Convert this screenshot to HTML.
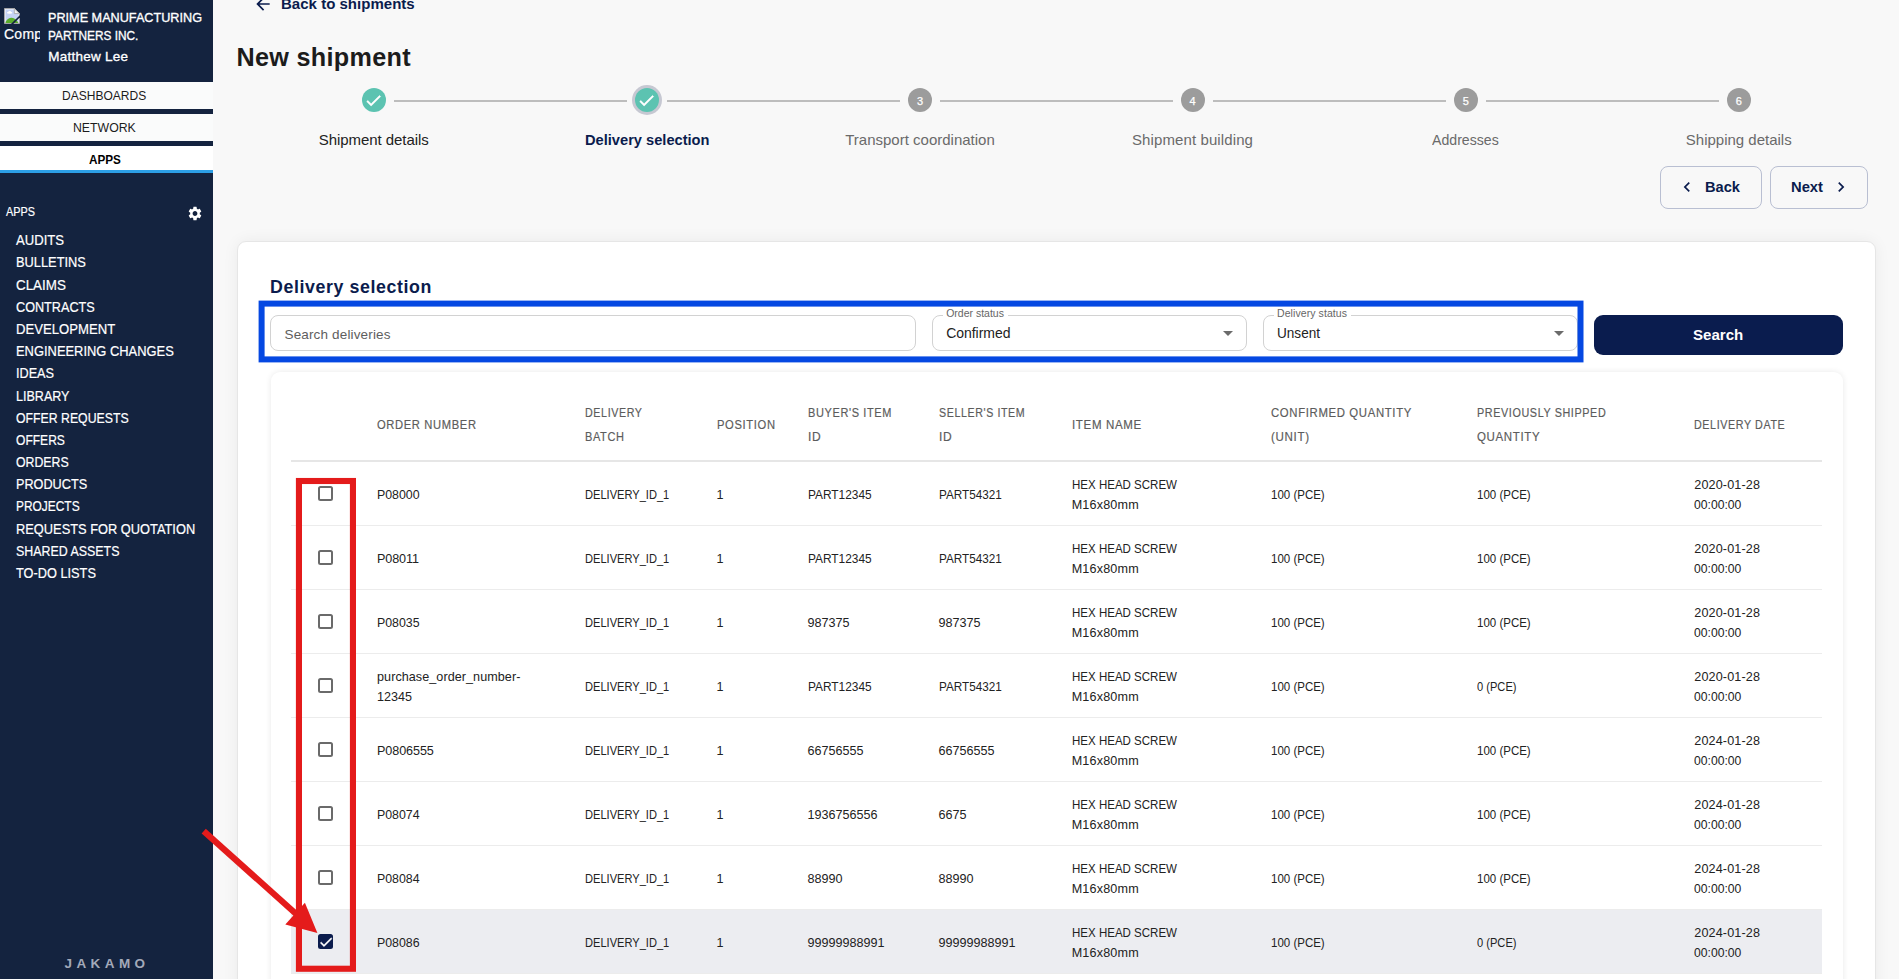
<!DOCTYPE html>
<html lang="en"><head><meta charset="utf-8"><title>New shipment</title>
<style>
*{box-sizing:border-box;margin:0;padding:0}
html,body{width:1899px;height:979px;overflow:hidden;background:#f8f8f8;font-family:'Liberation Sans', sans-serif;}
span{white-space:nowrap}
.x{display:inline-block}
.x>span{display:inline-block;transform-origin:0 50%}
.abs{position:absolute}
.navy{color:#0b1c4d}
#sb{position:absolute;left:0;top:0;width:213px;height:979px;background:#14233f;overflow:hidden;color:#fff}
#sb .brk{position:absolute;left:3.6px;top:7.6px}
#sb .alt{position:absolute;left:4px;top:25px;width:36px;overflow:hidden;line-height:18px;white-space:nowrap;-webkit-text-stroke:.2px #fff}
#sb .co{position:absolute;left:48.3px;line-height:18px;-webkit-text-stroke:.32px #fff}
#sb .tab{position:absolute;left:0;width:213px;color:#1c1c1c;text-align:center;padding-right:4px;display:flex;align-items:center;justify-content:center}
#sb .sec{position:absolute;left:6px;top:201.8px;line-height:18px;-webkit-text-stroke:.2px #fff}
#sb .gear{position:absolute;left:187px;top:204.5px}
#sb .menu{position:absolute;left:16px;top:229.2px}
#sb .mi{height:22.2px;line-height:22.2px;-webkit-text-stroke:.2px #fff}
#sb .logo{position:absolute;left:0;width:213px;top:954px;text-align:center;font:bold 13.5px 'Liberation Sans', sans-serif;letter-spacing:4.4px;color:#a3a9b9;line-height:20px;padding-left:1px}
.conn{position:absolute;top:100px;height:1.5px;background:#bdbdbd}
.circ{position:absolute;top:88px;width:24px;height:24px;border-radius:50%;display:flex;align-items:center;justify-content:center}
.circ.done,.circ.act{background:#5cc3b1}
.circ.todo{background:#9c9c9c;color:#fff;font:11px 'Liberation Sans', sans-serif;padding-top:1px;-webkit-text-stroke:.25px #fff}
.halo{position:absolute;top:85px;width:30px;height:30px;border-radius:50%;background:#c6c8d2}
.slab{position:absolute;top:130px;width:300px;text-align:center;line-height:20px;color:#6a6a6a}
.slab.done{color:#222}
.slab.act{color:#0b1c4d}
.btn{position:absolute;top:166.25px;height:42.5px;border:1px solid #b9bfd2;border-radius:8px}
#card{position:absolute;left:237px;top:241px;width:1638.5px;height:800px;background:#fff;border:1px solid #e6e6e6;border-radius:9px;box-shadow:0 0 16px rgba(0,0,0,.06)}
.inp{position:absolute;top:315px;height:36px;border:1px solid #d2d2d2;border-radius:8px;background:#fff}
.notch{position:absolute;top:-2px;height:4px;background:#fff}
.caret{right:13px;top:15px}
#sbtn{position:absolute;left:1594px;top:315px;width:249px;height:40px;border-radius:9px;background:#0a1c4e;color:#fff;display:flex;align-items:center;justify-content:center;padding-top:0px}
#blue{position:absolute;left:258.5px;top:300.5px;width:1325px;height:62px;border:6.2px solid #0548e2}
#tcard{position:absolute;left:271px;top:371.5px;width:1571.5px;height:700px;background:#fff;border-radius:9px;box-shadow:0 0 6px rgba(0,0,0,.09)}
.th{position:absolute;line-height:24px;color:#5c5c5c;-webkit-text-stroke:.18px #5c5c5c}
#hline{position:absolute;left:291px;top:459.7px;width:1531px;height:2px;background:#e6e6e6}
.tr{position:absolute;left:291px;width:1531px;height:64px;border-bottom:1px solid #ececec}
.tr.sel{background:#ecedf1}
.td{position:absolute;line-height:20px;color:#222}
.cb{position:absolute;left:27.2px;top:24.6px;width:15px;height:15.3px;border:2px solid #6a6a6a;border-radius:2.5px;background:#fff}
.cb.on{background:#0b1c4d;border:none;display:flex;align-items:center;justify-content:center}
#red{position:absolute;left:295.8px;top:478.2px;width:60.2px;height:493.6px;border:6.2px solid #e41b1b}
</style></head>
<body>

<svg class="abs" style="left:253.2px;top:-6.5px" width="20" height="20" viewBox="0 0 24 24"><path fill="#0b1c4d" d="M20 11H7.83l5.59-5.59L12 4l-8 8 8 8 1.41-1.41L7.83 13H20v-2z"/></svg>
<div class="abs navy" style="left:281.3px;top:-5.2px;line-height:18px"><span class="x" style="width:133.7px;font:bold 15.5px 'Liberation Sans', sans-serif;"><span style="transform:scaleX(0.9702)">Back to shipments</span></span></div>
<div class="abs" style="left:236.5px;top:42.5px;line-height:34px;color:#1c1c1c"><span style="font:bold 25.2px 'Liberation Sans', sans-serif;letter-spacing:0.30px;">New shipment</span></div>
<div class="conn" style="left:393.75px;width:233.0px"></div><div class="circ done" style="left:361.75px"><svg width="19" height="19" viewBox="0 0 24 24" style="flex:none"><path fill="#fff" stroke="#fff" stroke-width=".7" d="M9 16.17L4.83 12l-1.42 1.41L9 19 21 7l-1.41-1.41z"/></svg></div><div class="slab done" style="left:223.75px"><span style="font:15px 'Liberation Sans', sans-serif;letter-spacing:-0.06px;">Shipment details</span></div><div class="conn" style="left:666.75px;width:233.25px"></div><div class="halo" style="left:631.75px"></div><div class="circ act" style="left:634.75px"><svg width="19" height="19" viewBox="0 0 24 24" style="flex:none"><path fill="#fff" stroke="#fff" stroke-width=".7" d="M9 16.17L4.83 12l-1.42 1.41L9 19 21 7l-1.41-1.41z"/></svg></div><div class="slab act" style="left:496.75px"><span class="x" style="width:124.5px;font:bold 15px 'Liberation Sans', sans-serif;"><span style="transform:scaleX(0.9759)">Delivery selection</span></span></div><div class="conn" style="left:940px;width:232.5px"></div><div class="circ todo" style="left:908px"><span>3</span></div><div class="slab todo" style="left:770px"><span style="font:15px 'Liberation Sans', sans-serif;">Transport coordination</span></div><div class="conn" style="left:1212.5px;width:233.25px"></div><div class="circ todo" style="left:1180.5px"><span>4</span></div><div class="slab todo" style="left:1042.5px"><span style="font:15px 'Liberation Sans', sans-serif;letter-spacing:0.11px;">Shipment building</span></div><div class="conn" style="left:1485.75px;width:233.0px"></div><div class="circ todo" style="left:1453.75px"><span>5</span></div><div class="slab todo" style="left:1315.75px"><span class="x" style="width:66.8px;font:15px 'Liberation Sans', sans-serif;"><span style="transform:scaleX(0.9418)">Addresses</span></span></div><div class="circ todo" style="left:1726.75px"><span>6</span></div><div class="slab todo" style="left:1588.75px"><span style="font:15px 'Liberation Sans', sans-serif;">Shipping details</span></div>
<div class="btn" style="left:1660px;width:101.75px">
  <svg class="abs" style="left:15.5px;top:10px" width="20" height="20" viewBox="0 0 24 24"><path fill="#0b1c4d" d="M15.41 7.41L14 6l-6 6 6 6 1.41-1.41L10.83 12z"/></svg>
  <div class="abs navy" style="left:44.2px;top:11px;line-height:18px"><span class="x" style="width:35.0px;font:bold 15px 'Liberation Sans', sans-serif;"><span style="transform:scaleX(0.9760)">Back</span></span></div>
</div>
<div class="btn" style="left:1769.75px;width:98px">
  <div class="abs navy" style="left:20px;top:11px;line-height:18px"><span class="x" style="width:32.0px;font:bold 15px 'Liberation Sans', sans-serif;"><span style="transform:scaleX(0.9841)">Next</span></span></div>
  <svg class="abs" style="left:60.2px;top:10px" width="20" height="20" viewBox="0 0 24 24"><path fill="#0b1c4d" d="M10 6L8.59 7.41 13.17 12l-4.58 4.59L10 18l6-6z"/></svg>
</div>


<div id="card"></div>
<div class="abs navy" style="left:270px;top:276.3px;line-height:24px"><span style="font:bold 17.8px 'Liberation Sans', sans-serif;letter-spacing:0.60px;">Delivery selection</span></div>
<div class="inp" style="left:270px;width:645.75px"><div class="abs" style="left:13.5px;top:9px;line-height:18px;color:#5e5e5e"><span style="font:13.5px 'Liberation Sans', sans-serif;letter-spacing:0.15px;">Search deliveries</span></div></div>
<div class="inp" style="left:932px;width:314.75px">
  <div class="notch" style="left:9.5px;width:65px"></div>
  <div class="abs" style="left:13.2px;top:-9.8px;line-height:12px;color:#666"><span style="font:10.5px 'Liberation Sans', sans-serif;">Order status</span></div>
  <div class="abs" style="left:13.2px;top:8px;line-height:18px;color:#222"><span style="font:14px 'Liberation Sans', sans-serif;letter-spacing:-0.04px;">Confirmed</span></div>
  <svg class="abs caret" width="10" height="5" viewBox="0 0 10 5"><path d="M0 0h10L5 5z" fill="#6b6b6b"/></svg>
</div>
<div class="inp" style="left:1263px;width:315px">
  <div class="notch" style="left:9.5px;width:77px"></div>
  <div class="abs" style="left:13px;top:-9.8px;line-height:12px;color:#666"><span style="font:10.5px 'Liberation Sans', sans-serif;letter-spacing:0.08px;">Delivery status</span></div>
  <div class="abs" style="left:13px;top:8px;line-height:18px;color:#222"><span class="x" style="width:43.0px;font:14px 'Liberation Sans', sans-serif;"><span style="transform:scaleX(0.9694)">Unsent</span></span></div>
  <svg class="abs caret" width="10" height="5" viewBox="0 0 10 5"><path d="M0 0h10L5 5z" fill="#6b6b6b"/></svg>
</div>
<div id="sbtn"><span class="x" style="width:50.2px;font:bold 15.5px 'Liberation Sans', sans-serif;"><span style="transform:scaleX(0.9719)">Search</span></span></div>
<svg class="abs" style="left:250px;top:295px" width="1340" height="75" viewBox="250 295 1340 75"><rect x="261.6" y="303.6" width="1318.9" height="55.8" fill="none" stroke="#0548e2" stroke-width="6"/></svg>


<div id="tcard"></div>
<div class="th" style="left:377px;top:411.5px"><div><span class="x" style="width:99.0px;font:12.4px 'Liberation Sans', sans-serif;letter-spacing:0.7px;"><span style="transform:scaleX(0.9033)">ORDER NUMBER</span></span></div></div><div class="th" style="left:585px;top:399.5px"><div><span class="x" style="width:57.0px;font:12.4px 'Liberation Sans', sans-serif;letter-spacing:0.7px;"><span style="transform:scaleX(0.8640)">DELIVERY</span></span></div><div><span class="x" style="width:39.0px;font:12.4px 'Liberation Sans', sans-serif;letter-spacing:0.7px;"><span style="transform:scaleX(0.8888)">BATCH</span></span></div></div><div class="th" style="left:716.5px;top:411.5px"><div><span class="x" style="width:58.0px;font:12.4px 'Liberation Sans', sans-serif;letter-spacing:0.7px;"><span style="transform:scaleX(0.9047)">POSITION</span></span></div></div><div class="th" style="left:807.5px;top:399.5px"><div><span class="x" style="width:83.4px;font:12.4px 'Liberation Sans', sans-serif;letter-spacing:0.7px;"><span style="transform:scaleX(0.8866)">BUYER'S ITEM</span></span></div><div><span class="x" style="width:12.7px;font:12.4px 'Liberation Sans', sans-serif;letter-spacing:0.7px;"><span style="transform:scaleX(0.9697)">ID</span></span></div></div><div class="th" style="left:938.5px;top:399.5px"><div><span class="x" style="width:85.7px;font:12.4px 'Liberation Sans', sans-serif;letter-spacing:0.7px;"><span style="transform:scaleX(0.8605)">SELLER'S ITEM</span></span></div><div><span class="x" style="width:12.7px;font:12.4px 'Liberation Sans', sans-serif;letter-spacing:0.7px;"><span style="transform:scaleX(0.9697)">ID</span></span></div></div><div class="th" style="left:1071.7px;top:411.5px"><div><span class="x" style="width:69.3px;font:12.4px 'Liberation Sans', sans-serif;letter-spacing:0.7px;"><span style="transform:scaleX(0.9309)">ITEM NAME</span></span></div></div><div class="th" style="left:1270.7px;top:399.5px"><div><span class="x" style="width:140.3px;font:12.4px 'Liberation Sans', sans-serif;letter-spacing:0.7px;"><span style="transform:scaleX(0.9169)">CONFIRMED QUANTITY</span></span></div><div><span class="x" style="width:38.0px;font:12.4px 'Liberation Sans', sans-serif;letter-spacing:0.7px;"><span style="transform:scaleX(0.9342)">(UNIT)</span></span></div></div><div class="th" style="left:1476.7px;top:399.5px"><div><span class="x" style="width:128.7px;font:12.4px 'Liberation Sans', sans-serif;letter-spacing:0.7px;"><span style="transform:scaleX(0.8708)">PREVIOUSLY SHIPPED</span></span></div><div><span class="x" style="width:62.7px;font:12.4px 'Liberation Sans', sans-serif;letter-spacing:0.7px;"><span style="transform:scaleX(0.9282)">QUANTITY</span></span></div></div><div class="th" style="left:1694.3px;top:411.5px"><div><span class="x" style="width:90.7px;font:12.4px 'Liberation Sans', sans-serif;letter-spacing:0.7px;"><span style="transform:scaleX(0.8653)">DELIVERY DATE</span></span></div></div>
<div id="hline"></div>
<div class="tr" style="top:461.6px"><div class="cb"></div><div class="td" style="left:86px;top:22.200000000000003px"><div><span class="x" style="width:42.6px;font:12.6px 'Liberation Sans', sans-serif;"><span style="transform:scaleX(0.9811)">P08000</span></span></div></div><div class="td" style="left:294px;top:22.200000000000003px"><div><span class="x" style="width:84.3px;font:12.6px 'Liberation Sans', sans-serif;"><span style="transform:scaleX(0.8811)">DELIVERY_ID_1</span></span></div></div><div class="td" style="left:425.5px;top:22.200000000000003px"><div><span style="font:12.6px 'Liberation Sans', sans-serif;">1</span></div></div><div class="td" style="left:516.5px;top:22.200000000000003px"><div><span class="x" style="width:63.7px;font:12.6px 'Liberation Sans', sans-serif;"><span style="transform:scaleX(0.9444)">PART12345</span></span></div></div><div class="td" style="left:647.5px;top:22.200000000000003px"><div><span class="x" style="width:62.7px;font:12.6px 'Liberation Sans', sans-serif;"><span style="transform:scaleX(0.9295)">PART54321</span></span></div></div><div class="td" style="left:780.7px;top:12.200000000000003px"><div><span class="x" style="width:105.0px;font:12.6px 'Liberation Sans', sans-serif;"><span style="transform:scaleX(0.9149)">HEX HEAD SCREW</span></span></div><div><span style="font:12.6px 'Liberation Sans', sans-serif;letter-spacing:0.17px;">M16x80mm</span></div></div><div class="td" style="left:979.7px;top:22.200000000000003px"><div><span class="x" style="width:53.7px;font:12.6px 'Liberation Sans', sans-serif;"><span style="transform:scaleX(0.9133)">100 (PCE)</span></span></div></div><div class="td" style="left:1185.7px;top:22.200000000000003px"><div><span class="x" style="width:53.7px;font:12.6px 'Liberation Sans', sans-serif;"><span style="transform:scaleX(0.9133)">100 (PCE)</span></span></div></div><div class="td" style="left:1403.3px;top:12.200000000000003px"><div><span style="font:12.6px 'Liberation Sans', sans-serif;letter-spacing:0.14px;">2020-01-28</span></div><div><span class="x" style="width:47.3px;font:12.6px 'Liberation Sans', sans-serif;"><span style="transform:scaleX(0.9647)">00:00:00</span></span></div></div></div><div class="tr" style="top:525.6px"><div class="cb"></div><div class="td" style="left:86px;top:22.200000000000003px"><div><span style="font:12.6px 'Liberation Sans', sans-serif;letter-spacing:-0.10px;">P08011</span></div></div><div class="td" style="left:294px;top:22.200000000000003px"><div><span class="x" style="width:84.3px;font:12.6px 'Liberation Sans', sans-serif;"><span style="transform:scaleX(0.8811)">DELIVERY_ID_1</span></span></div></div><div class="td" style="left:425.5px;top:22.200000000000003px"><div><span style="font:12.6px 'Liberation Sans', sans-serif;">1</span></div></div><div class="td" style="left:516.5px;top:22.200000000000003px"><div><span class="x" style="width:63.7px;font:12.6px 'Liberation Sans', sans-serif;"><span style="transform:scaleX(0.9444)">PART12345</span></span></div></div><div class="td" style="left:647.5px;top:22.200000000000003px"><div><span class="x" style="width:62.7px;font:12.6px 'Liberation Sans', sans-serif;"><span style="transform:scaleX(0.9295)">PART54321</span></span></div></div><div class="td" style="left:780.7px;top:12.200000000000003px"><div><span class="x" style="width:105.0px;font:12.6px 'Liberation Sans', sans-serif;"><span style="transform:scaleX(0.9149)">HEX HEAD SCREW</span></span></div><div><span style="font:12.6px 'Liberation Sans', sans-serif;letter-spacing:0.17px;">M16x80mm</span></div></div><div class="td" style="left:979.7px;top:22.200000000000003px"><div><span class="x" style="width:53.7px;font:12.6px 'Liberation Sans', sans-serif;"><span style="transform:scaleX(0.9133)">100 (PCE)</span></span></div></div><div class="td" style="left:1185.7px;top:22.200000000000003px"><div><span class="x" style="width:53.7px;font:12.6px 'Liberation Sans', sans-serif;"><span style="transform:scaleX(0.9133)">100 (PCE)</span></span></div></div><div class="td" style="left:1403.3px;top:12.200000000000003px"><div><span style="font:12.6px 'Liberation Sans', sans-serif;letter-spacing:0.14px;">2020-01-28</span></div><div><span class="x" style="width:47.3px;font:12.6px 'Liberation Sans', sans-serif;"><span style="transform:scaleX(0.9647)">00:00:00</span></span></div></div></div><div class="tr" style="top:589.6px"><div class="cb"></div><div class="td" style="left:86px;top:22.200000000000003px"><div><span class="x" style="width:42.6px;font:12.6px 'Liberation Sans', sans-serif;"><span style="transform:scaleX(0.9811)">P08035</span></span></div></div><div class="td" style="left:294px;top:22.200000000000003px"><div><span class="x" style="width:84.3px;font:12.6px 'Liberation Sans', sans-serif;"><span style="transform:scaleX(0.8811)">DELIVERY_ID_1</span></span></div></div><div class="td" style="left:425.5px;top:22.200000000000003px"><div><span style="font:12.6px 'Liberation Sans', sans-serif;">1</span></div></div><div class="td" style="left:516.5px;top:22.200000000000003px"><div><span style="font:12.6px 'Liberation Sans', sans-serif;">987375</span></div></div><div class="td" style="left:647.5px;top:22.200000000000003px"><div><span style="font:12.6px 'Liberation Sans', sans-serif;">987375</span></div></div><div class="td" style="left:780.7px;top:12.200000000000003px"><div><span class="x" style="width:105.0px;font:12.6px 'Liberation Sans', sans-serif;"><span style="transform:scaleX(0.9149)">HEX HEAD SCREW</span></span></div><div><span style="font:12.6px 'Liberation Sans', sans-serif;letter-spacing:0.17px;">M16x80mm</span></div></div><div class="td" style="left:979.7px;top:22.200000000000003px"><div><span class="x" style="width:53.7px;font:12.6px 'Liberation Sans', sans-serif;"><span style="transform:scaleX(0.9133)">100 (PCE)</span></span></div></div><div class="td" style="left:1185.7px;top:22.200000000000003px"><div><span class="x" style="width:53.7px;font:12.6px 'Liberation Sans', sans-serif;"><span style="transform:scaleX(0.9133)">100 (PCE)</span></span></div></div><div class="td" style="left:1403.3px;top:12.200000000000003px"><div><span style="font:12.6px 'Liberation Sans', sans-serif;letter-spacing:0.14px;">2020-01-28</span></div><div><span class="x" style="width:47.3px;font:12.6px 'Liberation Sans', sans-serif;"><span style="transform:scaleX(0.9647)">00:00:00</span></span></div></div></div><div class="tr" style="top:653.6px"><div class="cb"></div><div class="td" style="left:86px;top:12.200000000000003px"><div><span style="font:12.6px 'Liberation Sans', sans-serif;letter-spacing:0.06px;">purchase_order_number-</span></div><div><span style="font:12.6px 'Liberation Sans', sans-serif;">12345</span></div></div><div class="td" style="left:294px;top:22.200000000000003px"><div><span class="x" style="width:84.3px;font:12.6px 'Liberation Sans', sans-serif;"><span style="transform:scaleX(0.8811)">DELIVERY_ID_1</span></span></div></div><div class="td" style="left:425.5px;top:22.200000000000003px"><div><span style="font:12.6px 'Liberation Sans', sans-serif;">1</span></div></div><div class="td" style="left:516.5px;top:22.200000000000003px"><div><span class="x" style="width:63.7px;font:12.6px 'Liberation Sans', sans-serif;"><span style="transform:scaleX(0.9444)">PART12345</span></span></div></div><div class="td" style="left:647.5px;top:22.200000000000003px"><div><span class="x" style="width:62.7px;font:12.6px 'Liberation Sans', sans-serif;"><span style="transform:scaleX(0.9295)">PART54321</span></span></div></div><div class="td" style="left:780.7px;top:12.200000000000003px"><div><span class="x" style="width:105.0px;font:12.6px 'Liberation Sans', sans-serif;"><span style="transform:scaleX(0.9149)">HEX HEAD SCREW</span></span></div><div><span style="font:12.6px 'Liberation Sans', sans-serif;letter-spacing:0.17px;">M16x80mm</span></div></div><div class="td" style="left:979.7px;top:22.200000000000003px"><div><span class="x" style="width:53.7px;font:12.6px 'Liberation Sans', sans-serif;"><span style="transform:scaleX(0.9133)">100 (PCE)</span></span></div></div><div class="td" style="left:1185.7px;top:22.200000000000003px"><div><span class="x" style="width:39.5px;font:12.6px 'Liberation Sans', sans-serif;"><span style="transform:scaleX(0.8818)">0 (PCE)</span></span></div></div><div class="td" style="left:1403.3px;top:12.200000000000003px"><div><span style="font:12.6px 'Liberation Sans', sans-serif;letter-spacing:0.14px;">2020-01-28</span></div><div><span class="x" style="width:47.3px;font:12.6px 'Liberation Sans', sans-serif;"><span style="transform:scaleX(0.9647)">00:00:00</span></span></div></div></div><div class="tr" style="top:717.6px"><div class="cb"></div><div class="td" style="left:86px;top:22.200000000000003px"><div><span style="font:12.6px 'Liberation Sans', sans-serif;letter-spacing:-0.09px;">P0806555</span></div></div><div class="td" style="left:294px;top:22.200000000000003px"><div><span class="x" style="width:84.3px;font:12.6px 'Liberation Sans', sans-serif;"><span style="transform:scaleX(0.8811)">DELIVERY_ID_1</span></span></div></div><div class="td" style="left:425.5px;top:22.200000000000003px"><div><span style="font:12.6px 'Liberation Sans', sans-serif;">1</span></div></div><div class="td" style="left:516.5px;top:22.200000000000003px"><div><span style="font:12.6px 'Liberation Sans', sans-serif;">66756555</span></div></div><div class="td" style="left:647.5px;top:22.200000000000003px"><div><span style="font:12.6px 'Liberation Sans', sans-serif;">66756555</span></div></div><div class="td" style="left:780.7px;top:12.200000000000003px"><div><span class="x" style="width:105.0px;font:12.6px 'Liberation Sans', sans-serif;"><span style="transform:scaleX(0.9149)">HEX HEAD SCREW</span></span></div><div><span style="font:12.6px 'Liberation Sans', sans-serif;letter-spacing:0.17px;">M16x80mm</span></div></div><div class="td" style="left:979.7px;top:22.200000000000003px"><div><span class="x" style="width:53.7px;font:12.6px 'Liberation Sans', sans-serif;"><span style="transform:scaleX(0.9133)">100 (PCE)</span></span></div></div><div class="td" style="left:1185.7px;top:22.200000000000003px"><div><span class="x" style="width:53.7px;font:12.6px 'Liberation Sans', sans-serif;"><span style="transform:scaleX(0.9133)">100 (PCE)</span></span></div></div><div class="td" style="left:1403.3px;top:12.200000000000003px"><div><span style="font:12.6px 'Liberation Sans', sans-serif;letter-spacing:0.14px;">2024-01-28</span></div><div><span class="x" style="width:47.3px;font:12.6px 'Liberation Sans', sans-serif;"><span style="transform:scaleX(0.9647)">00:00:00</span></span></div></div></div><div class="tr" style="top:781.6px"><div class="cb"></div><div class="td" style="left:86px;top:22.200000000000003px"><div><span class="x" style="width:42.6px;font:12.6px 'Liberation Sans', sans-serif;"><span style="transform:scaleX(0.9811)">P08074</span></span></div></div><div class="td" style="left:294px;top:22.200000000000003px"><div><span class="x" style="width:84.3px;font:12.6px 'Liberation Sans', sans-serif;"><span style="transform:scaleX(0.8811)">DELIVERY_ID_1</span></span></div></div><div class="td" style="left:425.5px;top:22.200000000000003px"><div><span style="font:12.6px 'Liberation Sans', sans-serif;">1</span></div></div><div class="td" style="left:516.5px;top:22.200000000000003px"><div><span style="font:12.6px 'Liberation Sans', sans-serif;">1936756556</span></div></div><div class="td" style="left:647.5px;top:22.200000000000003px"><div><span style="font:12.6px 'Liberation Sans', sans-serif;">6675</span></div></div><div class="td" style="left:780.7px;top:12.200000000000003px"><div><span class="x" style="width:105.0px;font:12.6px 'Liberation Sans', sans-serif;"><span style="transform:scaleX(0.9149)">HEX HEAD SCREW</span></span></div><div><span style="font:12.6px 'Liberation Sans', sans-serif;letter-spacing:0.17px;">M16x80mm</span></div></div><div class="td" style="left:979.7px;top:22.200000000000003px"><div><span class="x" style="width:53.7px;font:12.6px 'Liberation Sans', sans-serif;"><span style="transform:scaleX(0.9133)">100 (PCE)</span></span></div></div><div class="td" style="left:1185.7px;top:22.200000000000003px"><div><span class="x" style="width:53.7px;font:12.6px 'Liberation Sans', sans-serif;"><span style="transform:scaleX(0.9133)">100 (PCE)</span></span></div></div><div class="td" style="left:1403.3px;top:12.200000000000003px"><div><span style="font:12.6px 'Liberation Sans', sans-serif;letter-spacing:0.14px;">2024-01-28</span></div><div><span class="x" style="width:47.3px;font:12.6px 'Liberation Sans', sans-serif;"><span style="transform:scaleX(0.9647)">00:00:00</span></span></div></div></div><div class="tr" style="top:845.6px"><div class="cb"></div><div class="td" style="left:86px;top:22.200000000000003px"><div><span class="x" style="width:42.6px;font:12.6px 'Liberation Sans', sans-serif;"><span style="transform:scaleX(0.9811)">P08084</span></span></div></div><div class="td" style="left:294px;top:22.200000000000003px"><div><span class="x" style="width:84.3px;font:12.6px 'Liberation Sans', sans-serif;"><span style="transform:scaleX(0.8811)">DELIVERY_ID_1</span></span></div></div><div class="td" style="left:425.5px;top:22.200000000000003px"><div><span style="font:12.6px 'Liberation Sans', sans-serif;">1</span></div></div><div class="td" style="left:516.5px;top:22.200000000000003px"><div><span style="font:12.6px 'Liberation Sans', sans-serif;">88990</span></div></div><div class="td" style="left:647.5px;top:22.200000000000003px"><div><span style="font:12.6px 'Liberation Sans', sans-serif;">88990</span></div></div><div class="td" style="left:780.7px;top:12.200000000000003px"><div><span class="x" style="width:105.0px;font:12.6px 'Liberation Sans', sans-serif;"><span style="transform:scaleX(0.9149)">HEX HEAD SCREW</span></span></div><div><span style="font:12.6px 'Liberation Sans', sans-serif;letter-spacing:0.17px;">M16x80mm</span></div></div><div class="td" style="left:979.7px;top:22.200000000000003px"><div><span class="x" style="width:53.7px;font:12.6px 'Liberation Sans', sans-serif;"><span style="transform:scaleX(0.9133)">100 (PCE)</span></span></div></div><div class="td" style="left:1185.7px;top:22.200000000000003px"><div><span class="x" style="width:53.7px;font:12.6px 'Liberation Sans', sans-serif;"><span style="transform:scaleX(0.9133)">100 (PCE)</span></span></div></div><div class="td" style="left:1403.3px;top:12.200000000000003px"><div><span style="font:12.6px 'Liberation Sans', sans-serif;letter-spacing:0.14px;">2024-01-28</span></div><div><span class="x" style="width:47.3px;font:12.6px 'Liberation Sans', sans-serif;"><span style="transform:scaleX(0.9647)">00:00:00</span></span></div></div></div><div class="tr sel" style="top:909.6px"><div class="cb on"><svg width="16" height="16" viewBox="0 0 24 24" style="flex:none"><path fill="#fff" stroke="#fff" stroke-width=".6" d="M9 16.17L4.83 12l-1.42 1.41L9 19 21 7l-1.41-1.41z"/></svg></div><div class="td" style="left:86px;top:22.200000000000003px"><div><span class="x" style="width:42.6px;font:12.6px 'Liberation Sans', sans-serif;"><span style="transform:scaleX(0.9811)">P08086</span></span></div></div><div class="td" style="left:294px;top:22.200000000000003px"><div><span class="x" style="width:84.3px;font:12.6px 'Liberation Sans', sans-serif;"><span style="transform:scaleX(0.8811)">DELIVERY_ID_1</span></span></div></div><div class="td" style="left:425.5px;top:22.200000000000003px"><div><span style="font:12.6px 'Liberation Sans', sans-serif;">1</span></div></div><div class="td" style="left:516.5px;top:22.200000000000003px"><div><span style="font:12.6px 'Liberation Sans', sans-serif;">99999988991</span></div></div><div class="td" style="left:647.5px;top:22.200000000000003px"><div><span style="font:12.6px 'Liberation Sans', sans-serif;">99999988991</span></div></div><div class="td" style="left:780.7px;top:12.200000000000003px"><div><span class="x" style="width:105.0px;font:12.6px 'Liberation Sans', sans-serif;"><span style="transform:scaleX(0.9149)">HEX HEAD SCREW</span></span></div><div><span style="font:12.6px 'Liberation Sans', sans-serif;letter-spacing:0.17px;">M16x80mm</span></div></div><div class="td" style="left:979.7px;top:22.200000000000003px"><div><span class="x" style="width:53.7px;font:12.6px 'Liberation Sans', sans-serif;"><span style="transform:scaleX(0.9133)">100 (PCE)</span></span></div></div><div class="td" style="left:1185.7px;top:22.200000000000003px"><div><span class="x" style="width:39.5px;font:12.6px 'Liberation Sans', sans-serif;"><span style="transform:scaleX(0.8818)">0 (PCE)</span></span></div></div><div class="td" style="left:1403.3px;top:12.200000000000003px"><div><span style="font:12.6px 'Liberation Sans', sans-serif;letter-spacing:0.14px;">2024-01-28</span></div><div><span class="x" style="width:47.3px;font:12.6px 'Liberation Sans', sans-serif;"><span style="transform:scaleX(0.9647)">00:00:00</span></span></div></div></div>
<svg class="abs" style="left:290px;top:470px" width="75" height="509" viewBox="290 470 75 509"><rect x="298.95" y="481" width="54" height="487.75" fill="none" stroke="#e41b1b" stroke-width="6.1"/></svg>



<div id="sb">
  <svg class="brk" width="16.4" height="16.4" viewBox="0 0 17 17">
    <path d="M0.5 0.5h10.3l5.2 5.2v10.3h-15.5z" fill="#f2f4fb" stroke="#a9a9a9" stroke-width="1"/>
    <path d="M1.6 1.6H10.3L15 6.3V15.5H1.6z" fill="#c6d3f5"/>
    <ellipse cx="5.8" cy="4.9" rx="2.9" ry="1.1" fill="#fff"/><ellipse cx="5.9" cy="4.1" rx="1.5" ry="1" fill="#fff"/>
    <path d="M1.6 15.5V14.4C3.2 11.2 5.8 10 8 10.1C10.8 10.3 13.4 12.4 15 15.5z" fill="#5aad2b"/>
    <path d="M10.7 0.6v5.2h5.2z" fill="#f3f3f3" stroke="#a9a9a9" stroke-width=".9" stroke-linejoin="round"/>
    <path d="M17 8L8 17" stroke="#14233f" stroke-width="1.7"/>
  </svg>
  <div class="alt"><span style="font:14px 'Liberation Sans', sans-serif;letter-spacing:0.25px;">Company logo</span></div>
  <div class="co" style="top:8px"><span class="x" style="width:154.0px;font:13px 'Liberation Sans', sans-serif;"><span style="transform:scaleX(0.9736)">PRIME MANUFACTURING</span></span></div>
  <div class="co" style="top:26px"><span class="x" style="width:90.4px;font:13px 'Liberation Sans', sans-serif;"><span style="transform:scaleX(0.9113)">PARTNERS INC.</span></span></div>
  <div class="co" style="top:47px"><span style="font:13.5px 'Liberation Sans', sans-serif;letter-spacing:0.23px;">Matthew Lee</span></div>
  <div class="tab" style="top:82px;height:27px;background:#fafbfb"><span class="x" style="width:84.2px;font:13px 'Liberation Sans', sans-serif;"><span style="transform:scaleX(0.9250)">DASHBOARDS</span></span></div>
  <div class="tab" style="top:114px;height:27px;background:#fafbfb"><span class="x" style="width:62.8px;font:13px 'Liberation Sans', sans-serif;"><span style="transform:scaleX(0.9450)">NETWORK</span></span></div>
  <div class="tab" style="top:146px;height:27px;background:#fff;border-bottom:3px solid #2c9fe6;color:#000;padding-top:2.5px"><span class="x" style="width:31.9px;font:bold 13px 'Liberation Sans', sans-serif;"><span style="transform:scaleX(0.9010)">APPS</span></span></div>
  <div class="sec"><span class="x" style="width:29.0px;font:12.5px 'Liberation Sans', sans-serif;"><span style="transform:scaleX(0.8693)">APPS</span></span></div>
  <svg class="gear" width="16" height="17" viewBox="0 0 24 24" preserveAspectRatio="none"><path fill="#fff" d="M19.14 12.94c.04-.3.06-.61.06-.94 0-.32-.02-.64-.07-.94l2.03-1.58a.49.49 0 0 0 .12-.61l-1.92-3.32a.488.488 0 0 0-.59-.22l-2.39.96c-.5-.38-1.03-.7-1.62-.94l-.36-2.54a.484.484 0 0 0-.48-.41h-3.84c-.24 0-.43.17-.47.41l-.36 2.54c-.59.24-1.13.57-1.62.94l-2.39-.96c-.22-.08-.47 0-.59.22L2.74 8.87c-.12.21-.08.47.12.61l2.03 1.58c-.05.3-.09.63-.09.94s.02.64.07.94l-2.03 1.58a.49.49 0 0 0-.12.61l1.92 3.32c.12.22.37.29.59.22l2.39-.96c.5.38 1.03.7 1.62.94l.36 2.54c.05.24.24.41.48.41h3.84c.24 0 .44-.17.47-.41l.36-2.54c.59-.24 1.13-.56 1.62-.94l2.39.96c.22.08.47 0 .59-.22l1.92-3.32c.12-.22.07-.47-.12-.61l-2.01-1.58zM12 15.6c-1.98 0-3.6-1.62-3.6-3.6s1.62-3.6 3.6-3.6 3.6 1.62 3.6 3.6-1.62 3.6-3.6 3.6z"/></svg>
  <div class="menu"><div class="mi"><span class="x" style="width:48.0px;font:14px 'Liberation Sans', sans-serif;"><span style="transform:scaleX(0.9349)">AUDITS</span></span></div><div class="mi"><span class="x" style="width:69.9px;font:14px 'Liberation Sans', sans-serif;"><span style="transform:scaleX(0.9167)">BULLETINS</span></span></div><div class="mi"><span class="x" style="width:49.8px;font:14px 'Liberation Sans', sans-serif;"><span style="transform:scaleX(0.9554)">CLAIMS</span></span></div><div class="mi"><span class="x" style="width:78.7px;font:14px 'Liberation Sans', sans-serif;"><span style="transform:scaleX(0.9033)">CONTRACTS</span></span></div><div class="mi"><span class="x" style="width:99.2px;font:14px 'Liberation Sans', sans-serif;"><span style="transform:scaleX(0.9375)">DEVELOPMENT</span></span></div><div class="mi"><span class="x" style="width:157.8px;font:14px 'Liberation Sans', sans-serif;"><span style="transform:scaleX(0.9220)">ENGINEERING CHANGES</span></span></div><div class="mi"><span class="x" style="width:38.0px;font:14px 'Liberation Sans', sans-serif;"><span style="transform:scaleX(0.9044)">IDEAS</span></span></div><div class="mi"><span class="x" style="width:53.5px;font:14px 'Liberation Sans', sans-serif;"><span style="transform:scaleX(0.8966)">LIBRARY</span></span></div><div class="mi"><span class="x" style="width:112.6px;font:14px 'Liberation Sans', sans-serif;"><span style="transform:scaleX(0.8772)">OFFER REQUESTS</span></span></div><div class="mi"><span class="x" style="width:48.9px;font:14px 'Liberation Sans', sans-serif;"><span style="transform:scaleX(0.8612)">OFFERS</span></span></div><div class="mi"><span class="x" style="width:52.7px;font:14px 'Liberation Sans', sans-serif;"><span style="transform:scaleX(0.8797)">ORDERS</span></span></div><div class="mi"><span class="x" style="width:71.1px;font:14px 'Liberation Sans', sans-serif;"><span style="transform:scaleX(0.9050)">PRODUCTS</span></span></div><div class="mi"><span class="x" style="width:63.6px;font:14px 'Liberation Sans', sans-serif;"><span style="transform:scaleX(0.8515)">PROJECTS</span></span></div><div class="mi"><span class="x" style="width:179.2px;font:14px 'Liberation Sans', sans-serif;"><span style="transform:scaleX(0.9166)">REQUESTS FOR QUOTATION</span></span></div><div class="mi"><span class="x" style="width:103.4px;font:14px 'Liberation Sans', sans-serif;"><span style="transform:scaleX(0.8860)">SHARED ASSETS</span></span></div><div class="mi"><span class="x" style="width:79.9px;font:14px 'Liberation Sans', sans-serif;"><span style="transform:scaleX(0.9115)">TO-DO LISTS</span></span></div></div>
  <div class="logo">JAKAMO</div>
</div>

<svg class="abs" style="left:190px;top:815px" width="150" height="140" viewBox="190 815 150 140">
  <path d="M203.7 831.1L297 914.7" stroke="#e41b1b" stroke-width="6.2" fill="none"/>
  <path d="M317.4 933L285.3 924.6L304.9 902.7z" fill="#e41b1b"/>
</svg>
</body></html>
